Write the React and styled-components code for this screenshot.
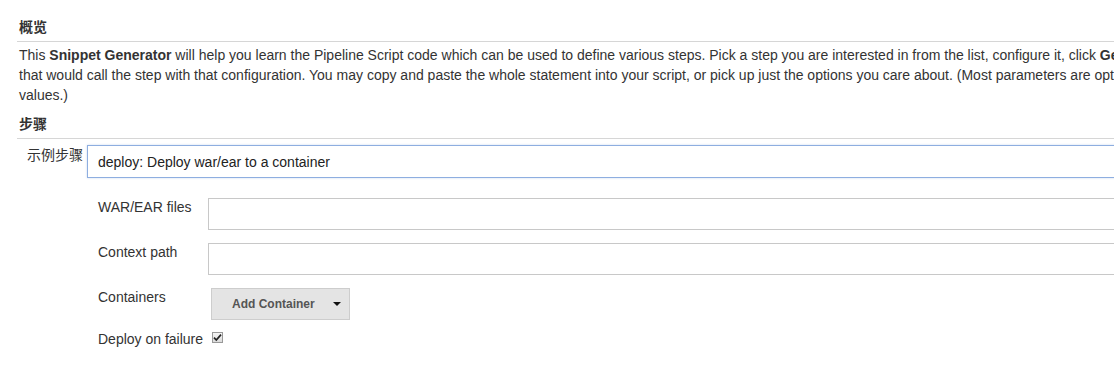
import React from 'react'
import styled, { createGlobalStyle } from 'styled-components'

const GlobalStyle = createGlobalStyle`
  html, body {
    margin: 0;
    padding: 0;
    background: #fff;
    overflow: hidden;
  }
  body {
    font-family: "Liberation Sans", Arial, "Noto Sans CJK SC", sans-serif;
    color: #333;
  }
`

const steps = [
  {
    label: 'WAR/EAR files',
    kind: 'text',
  },
  {
    label: 'Context path',
    kind: 'text',
  },
  {
    label: 'Containers',
    kind: 'button',
  },
  {
    label: 'Deploy on failure',
    kind: 'checkbox',
  },
]

export default function App() {
  return (
    <>
      <GlobalStyle />
      <Page>
        <SectionHeader>概览</SectionHeader>
        <Description>
          This <b>Snippet Generator</b> will help you learn the Pipeline Script code which can be used
          to define various steps. Pick a step you are interested in from the list, configure it, click{' '}
          <b>Generate Pipeline Script</b>, and you will see a Pipeline Script statement
          <br />
          that would call the step with that configuration. You may copy and paste the whole statement
          into your script, or pick up just the options you care about. (Most parameters are optional and
          can be omitted in your script, leaving them at default
          <br />
          values.)
        </Description>
        <SectionHeader spaced>步骤</SectionHeader>
        <StepRow>
          <StepLabel>示例步骤</StepLabel>
          <StepSelect>deploy: Deploy war/ear to a container</StepSelect>
        </StepRow>
        <Fields>
          {steps.map((s) => (
            <React.Fragment key={s.label}>
              <FieldLabel last={s.kind === 'checkbox'}>{s.label}</FieldLabel>
              {s.kind === 'text' && <TextBox />}
              {s.kind === 'button' && (
                <DropButton type="button">
                  Add Container
                  <Caret />
                </DropButton>
              )}
              {s.kind === 'checkbox' && (
                <CheckBox>
                  <svg width="9" height="9" viewBox="0 0 9 9">
                    <path d="M1 4.6 L3.3 7 L8 1.6" fill="none" stroke="#222" strokeWidth="1.7" />
                  </svg>
                </CheckBox>
              )}
            </React.Fragment>
          ))}
        </Fields>
      </Page>
    </>
  )
}

const Page = styled.div`
  width: 1500px;
  padding: 17px 0 0 17px;
`

const SectionHeader = styled.h3`
  margin: ${(props) => (props.spaced ? '9px' : '0')} 0 0 0;
  padding: 0 0 4px 2px;
  font-size: 14px;
  font-weight: bold;
  line-height: 20px;
  color: #333;
  border-bottom: 1px solid #d6d6d6;
`

const Description = styled.div`
  margin: 3px 0 0 2px;
  font-size: 14px;
  line-height: 20px;
  white-space: nowrap;
  color: #333;
`

const StepRow = styled.div`
  display: flex;
  align-items: flex-start;
  margin-top: 6px;
`

const StepLabel = styled.div`
  box-sizing: border-box;
  width: 70px;
  padding: 1px 0 0 10px;
  font-size: 14px;
  line-height: 18px;
  color: #333;
`

const StepSelect = styled.div`
  flex: 1;
  height: 31px;
  padding-left: 10px;
  border: 1px solid #8eaee0;
  box-shadow: 0 0 2px rgba(130, 165, 220, 0.4);
  display: flex;
  align-items: center;
  font-size: 14px;
  color: #222;
`

const Fields = styled.div`
  display: grid;
  grid-template-columns: 110px 1fr;
  row-gap: 13px;
  align-items: start;
  margin: 20px 0 0 81px;
`

const FieldLabel = styled.div`
  margin-top: ${(props) => (props.last ? '-3px' : '0')};
  font-size: 14px;
  line-height: 18px;
  color: #333;
`

const TextBox = styled.div`
  height: 30px;
  border: 1px solid #c8c8c8;
  background: #fff;
`

const DropButton = styled.button`
  justify-self: start;
  margin-left: 3px;
  width: 139px;
  height: 32px;
  padding: 0 0 0 20px;
  display: flex;
  align-items: center;
  gap: 18px;
  border: 1px solid #cdcdcd;
  background: #e4e4e4;
  font-family: "Liberation Sans", Arial, sans-serif;
  font-size: 12px;
  font-weight: bold;
  color: #555;
  cursor: pointer;
`

const Caret = styled.span`
  width: 0;
  height: 0;
  border-left: 4px solid transparent;
  border-right: 4px solid transparent;
  border-top: 4px solid #111;
`

const CheckBox = styled.span`
  justify-self: start;
  margin: -1px 0 0 4px;
  width: 11px;
  height: 11px;
  box-sizing: border-box;
  border: 1px solid #999;
  background: linear-gradient(#f4f4f4, #dcdcdc);
  display: flex;
  align-items: center;
  justify-content: center;
`
